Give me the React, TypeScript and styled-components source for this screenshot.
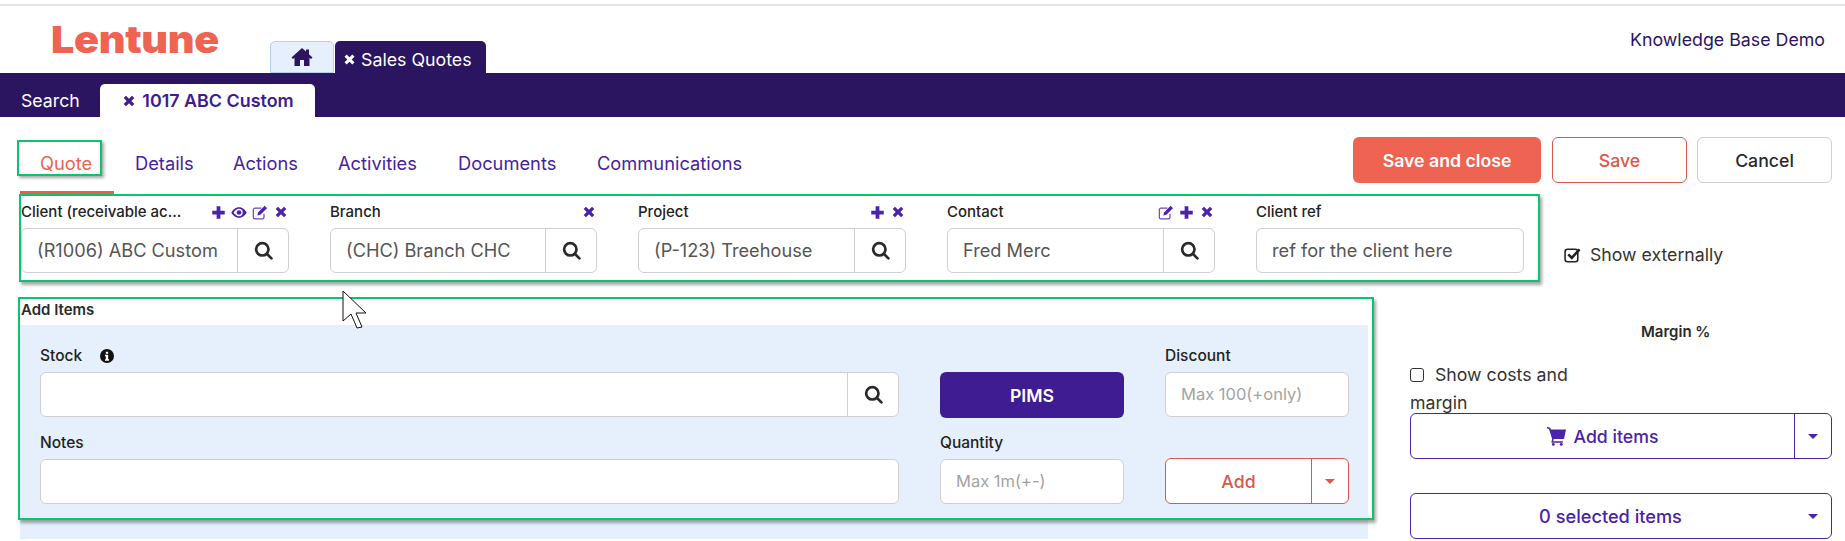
import React from "react";
import styled, { createGlobalStyle } from "styled-components";

const GREEN = "#0cc46c";
const NAVY = "#2b1561";
const PURPLE = "#3f1c91";
const VIOLET = "#4a22ab";
const CORAL = "#ee6352";
const RED = "#d9584a";
const BORDER = "#cfcfcf";

const Global = createGlobalStyle`
  html, body { margin: 0; padding: 0; background: #fff; }
  body { font-family: Inter, "Noto Sans", Roboto, sans-serif; color: #222; overflow: hidden; }
  * { box-sizing: border-box; }
`;

const Page = styled.div`
  position: relative;
  width: 1845px;
  height: 541px;
  overflow: hidden;
  border-top: 2px solid #e4e4e4;
  margin-top: 4px;
`;

const Header = styled.header`
  height: 67px;
  display: flex;
  align-items: flex-end;
  padding-left: 52px;
  padding-right: 20px;
`;

const Logo = styled.div`
  font-family: Inter, sans-serif;
  font-weight: 900;
  font-size: 37.5px;
  line-height: 34px;
  letter-spacing: -0.3px;
  color: ${CORAL};
  width: 218px;
  align-self: flex-start;
  margin-top: 17px;
  margin-left: -1px;
  margin-right: 1px;
  transform: scaleX(1.1);
  transform-origin: left center;
`;

const TopTabs = styled.div`
  display: flex;
  gap: 1px;
  flex: 1;
`;

const HomeTab = styled.div`
  width: 64px;
  height: 32px;
  background: #e6f0fc;
  border: 1px solid #b5d0f0;
  border-radius: 5px 5px 0 0;
  display: flex;
  align-items: center;
  justify-content: center;
`;

const SalesTab = styled.div`
  width: 151px;
  height: 32px;
  background: ${NAVY};
  color: #fff;
  border-radius: 5px 5px 0 0;
  font-size: 17.8px;
  display: flex;
  align-items: center;
  gap: 4px;
  padding: 4px 0 0 7px;
`;

const Company = styled.div`
  align-self: flex-start;
  margin-top: 24px;
  font-size: 17.8px;
  line-height: 20px;
  color: ${NAVY};
`;

const NavBar = styled.nav`
  height: 44px;
  background: ${NAVY};
  display: flex;
  align-items: flex-end;
  padding-left: 21px;
`;

const NavLink = styled.div`
  color: #fff;
  font-size: 17.7px;
  line-height: 33px;
  width: 79px;
`;

const ActiveTab = styled.div`
  width: 215px;
  height: 33px;
  background: #fff;
  border-radius: 5px 5px 0 0;
  color: ${PURPLE};
  font-weight: 600;
  font-size: 17.9px;
  display: flex;
  align-items: center;
  justify-content: center;
  gap: 5px;
`;

const Content = styled.main`
  display: grid;
  grid-template-columns: 1390px 1fr;
  padding-left: 17px;
`;

const Left = styled.div`
  display: flex;
  flex-direction: column;
`;

const SubTabs = styled.div`
  display: flex;
  height: 77px;
  padding-top: 23px;
  align-items: flex-start;
`;

const SubTab = styled.div<{ $w: number }>`
  width: ${(p) => p.$w}px;
  font-size: 18.3px;
  line-height: 46px;
  color: #46239c;
  flex: none;
`;

const QuoteTab = styled.div`
  position: relative;
  flex: none;
  width: 94px;
  height: 54px;
  margin-left: 3px;
  margin-right: 21px;
  padding-left: 20px;
  font-size: 18.3px;
  line-height: 46px;
  color: ${CORAL};
  border-bottom: 3px solid #e45f4f;
`;

const QuoteMark = styled.div`
  position: absolute;
  left: -3px;
  top: 0;
  width: 85px;
  height: 36px;
  border: 2px solid ${GREEN};
  box-shadow: 2px 2px 3px rgba(0, 0, 0, 0.35);
`;

const HeaderBox = styled.section`
  border: 2px solid ${GREEN};
  box-shadow: 2px 3px 3px rgba(0, 0, 0, 0.35);
  width: 1521px;
  height: 88px;
  margin-left: 2px;
  padding: 4px 0 0 0;
  display: grid;
  grid-template-columns: 268px 267px 268px 268px 268px;
  column-gap: 41px;
  position: relative;
  z-index: 1;
  background: #fff;
`;

const Field = styled.div`
  display: flex;
  flex-direction: column;
`;

const LabelRow = styled.div`
  height: 28px;
  padding-bottom: 4px;
  display: flex;
  align-items: center;
  justify-content: space-between;
`;

const Label = styled.div`
  font-size: 15px;
  font-weight: 500;
  line-height: 18px;
  color: #222;
`;

const IconSet = styled.div`
  display: flex;
  align-items: center;
  gap: 5px;
  color: ${VIOLET};
`;

const InputGroup = styled.div<{ $h?: number }>`
  display: flex;
  height: ${(p) => p.$h ?? 45}px;
  background: #fff;
  border: 1px solid ${BORDER};
  border-radius: 6px;
`;

const InputText = styled.div<{ $placeholder?: boolean }>`
  flex: 1;
  min-width: 0;
  padding-left: 15px;
  font-size: ${(p) => (p.$placeholder ? 16.5 : 18.2)}px;
  line-height: 43px;
  white-space: nowrap;
  overflow: hidden;
  color: ${(p) => (p.$placeholder ? "#a3a3a3" : "#555")};
`;

const SearchAddon = styled.div`
  width: 51px;
  flex: none;
  border-left: 1px solid ${BORDER};
  display: flex;
  align-items: center;
  justify-content: center;
`;

const ExternalCheck = styled.label`
  display: flex;
  align-items: center;
  gap: 9px;
  font-size: 17.7px;
  color: #333;
  position: absolute;
  left: 1564px;
  top: 238px;
`;

const AddLabel = styled.div`
  font-size: 15px;
  font-weight: 600;
  line-height: 18px;
  padding: 2px 0 0 1px;
  height: 26px;
  color: #2a2a2a;
`;

const AddBox = styled.section`
  position: relative;
  height: 223px;
  width: 1356px;
  padding: 2px;
  margin-top: 15px;
  margin-left: 1px;

  &::after {
    content: "";
    position: absolute;
    inset: 0;
    border: 2px solid ${GREEN};
    box-shadow: 2px 3px 3px rgba(0, 0, 0, 0.35);
    pointer-events: none;
  }
`;

const BluePanel = styled.div`
  position: absolute;
  left: 2px;
  right: 6px;
  top: 28px;
  height: 214px;
  background: #e6f0fc;
`;

const AddContent = styled.div`
  position: relative;
`;

const FormGrid = styled.div`
  display: grid;
  grid-template-columns: 859px 184px 184px;
  column-gap: 41px;
  padding-left: 20px;
  padding-top: 4px;
  grid-template-rows: 43px 46px 41px 46px;
`;

const FormLabel = styled.div`
  font-size: 15.5px;
  font-weight: 500;
  line-height: 18px;
  color: #222;
  display: flex;
  align-items: center;
  gap: 18px;
  margin-bottom: 7px;
`;

const Cell = styled.div<{ $row: number; $col: number }>`
  grid-row: ${(p) => p.$row};
  grid-column: ${(p) => p.$col};
  align-self: ${(p) => (p.$row % 2 ? "end" : "start")};
`;

const Btn = styled.div<{ $variant: "solid" | "outline" | "ghost" | "purple"; $w?: number }>`
  height: 46px;
  ${(p) => (p.$w ? `width: ${p.$w}px;` : "")}
  border-radius: 6px;
  display: flex;
  align-items: center;
  justify-content: center;
  font-size: 17.7px;
  font-weight: ${(p) => (p.$variant === "solid" || p.$variant === "purple" ? 600 : 500)};
  flex: none;
  ${(p) =>
    p.$variant === "solid"
      ? `background:${CORAL};color:#fff;`
      : p.$variant === "outline"
      ? `background:#fff;color:${RED};border:1px solid ${RED};`
      : p.$variant === "purple"
      ? `background:${PURPLE};color:#fff;`
      : `background:#fff;color:#2a2a2a;border:1px solid ${BORDER};`}
`;

const SplitBtn = styled.div<{ $color: string }>`
  display: flex;
  height: 46px;
  background: #fff;
  border: 1px solid ${(p) => p.$color};
  border-radius: 6px;
  color: ${(p) => p.$color};
  font-size: 17.7px;
  font-weight: 500;
`;

const AddSplit = styled(SplitBtn)`
  margin-top: -1px;
`;

const SplitMain = styled.div`
  flex: 1;
  display: flex;
  align-items: center;
  justify-content: center;
  gap: 8px;
`;

const SelectMain = styled(SplitMain)`
  padding-left: 16px;
  font-size: 18.2px;
`;

const SplitCaret = styled.div<{ $divider: boolean }>`
  width: 37px;
  flex: none;
  border-left: 1px solid ${(p) => (p.$divider ? "currentColor" : "transparent")};
  display: flex;
  align-items: center;
  justify-content: center;
`;

const Caret = styled.span`
  width: 0;
  height: 0;
  border-left: 5px solid transparent;
  border-right: 5px solid transparent;
  border-top: 5px solid currentColor;
`;

const Right = styled.aside`
  display: flex;
  flex-direction: column;
  width: 422px;
  margin-left: 3px;
`;

const TopActions = styled.div`
  position: absolute;
  top: 131px;
  right: 13px;
  display: flex;
`;

const ActionGap = styled.div<{ $w: number }>`
  width: ${(p) => p.$w}px;
  flex: none;
`;

const MarginTitle = styled.div`
  font-size: 15px;
  font-weight: 600;
  padding-left: 231px;
  margin-top: 206px;
  line-height: 18px;
  color: #2a2a2a;
`;

const CostsCheck = styled.div`
  margin-top: 20px;
  font-size: 17.7px;
  line-height: 28px;
  width: 200px;
  color: #333;
  height: 52px;
`;

const Box = styled.span`
  display: inline-block;
  width: 14px;
  height: 14px;
  border: 1.5px solid #333;
  border-radius: 3px;
  margin-right: 11px;
  vertical-align: -1px;
`;

const Gap = styled.div<{ $h: number }>`
  height: ${(p) => p.$h}px;
`;

const Cursor = styled.svg`
  position: absolute;
  left: 342px;
  top: 284px;
  z-index: 5;
`;

const Ico = ({ d, s = 14, c = "currentColor" }: { d: string; s?: number; c?: string }) => (
  <svg width={s} height={s} viewBox="0 0 24 24" fill={c}>
    <path d={d} />
  </svg>
);

const X = ({ s = 16 }: { s?: number }) => (
  <Ico s={s} d="M4 7.500 7.500 4 12 8.500 16.500 4 20 7.500 15.500 12 20 16.500 16.500 20 12 15.500 7.500 20 4 16.500 8.500 12Z" />
);
const Plus = () => <Ico s={15} d="M9 2h6v7h7v6h-7v7H9v-7H2V9h7Z" />;
const Eye = () => (
  <svg width="16" height="13" viewBox="0 0 24 18" fill="currentColor">
    <path
      fillRule="evenodd"
      d="M12 1C6.500 1 2.500 5 .5 9c2 4 6 8 11.500 8s9.500-4 11.500-8c-2-4-6-8-11.500-8Zm0 2.500a5.500 5.500 0 1 1 0 11 5.500 5.500 0 0 1 0-11ZM4 9c.8-1.500 2-2.800 3.400-3.700A7 7 0 0 0 7.400 12.700 10 10 0 0 1 4 9Z"
    />
    <circle cx="12" cy="9" r="3.500" />
  </svg>
);
const Edit = () => (
  <svg width="16" height="15" viewBox="0 0 24 22" fill="none" stroke="#6a45c5" strokeWidth="1.800">
    <path d="M18 13v5a2.500 2.500 0 0 1-2.500 2.500h-11A2.500 2.500 0 0 1 2 18V7a2.500 2.500 0 0 1 2.500-2.500H14" />
    <path fill={VIOLET} stroke="none" d="M9 11 19 1l3.500 3.500-10 10L8 15.500Z" />
  </svg>
);
const Search = () => (
  <svg width="19" height="19" viewBox="0 0 24 24" fill="none" stroke="#2a2a2a" strokeWidth="3.400" strokeLinecap="round">
    <circle cx="10.500" cy="10.500" r="7.800" />
    <path d="m16.500 16.500 5.500 5.500" />
  </svg>
);
const Home = () => (
  <Ico s={24} c={NAVY} d="M12 3 1.500 12.500 3 14l1.500-1.300V21H10v-6h4v6h5.500v-8.300L21 14l1.500-1.500L19 9.300V4.500h-3v2.100Z" />
);
const Info = () => (
  <svg width="14" height="14" viewBox="0 0 24 24">
    <circle cx="12" cy="12" r="12" fill="#111" />
    <path fill="#fff" d="M10 4.500h4v3.500h-4ZM8.500 10H14v7.500h1.500V20h-7v-2.500H10V12.500H8.500Z" />
  </svg>
);
const Cart = () => (
  <svg width="19" height="19" viewBox="0 0 24 24" fill="currentColor">
    <path d="M0 0c3 0 4.500 1 5 3h19l-2.500 12H8.500L7.700 18H20v1.800H5.500L6.500 15 3 4C2.700 2.800 1.800 2 0 2Z" />
    <circle cx="8" cy="22" r="1.800" />
    <circle cx="18" cy="22" r="1.800" />
  </svg>
);
const Checked = () => (
  <svg width="17" height="16" viewBox="0 0 24 22" fill="none" stroke="#222" strokeWidth="2.200">
    <rect x="1.500" y="3" width="18" height="17.500" rx="3.500" />
    <path d="m6 10 5 5L22 3" strokeWidth="3.600" />
  </svg>
);

const SearchField = ({ value }: { value?: string }) => (
  <InputGroup>
    <InputText>{value}</InputText>
    <SearchAddon>
      <Search />
    </SearchAddon>
  </InputGroup>
);

export default function App() {
  return (
    <Page>
      <Global />
      <Header>
        <Logo>Lentune</Logo>
        <TopTabs>
          <HomeTab>
            <Home />
          </HomeTab>
          <SalesTab>
            <X s={15} />
            Sales Quotes
          </SalesTab>
        </TopTabs>
        <Company>Knowledge Base Demo</Company>
      </Header>
      <NavBar>
        <NavLink>Search</NavLink>
        <ActiveTab>
          <X s={16} />
          1017 ABC Custom
        </ActiveTab>
      </NavBar>
      <TopActions>
        <Btn $variant="solid" $w={188}>Save and close</Btn>
        <ActionGap $w={11} />
        <Btn $variant="outline" $w={135}>Save</Btn>
        <ActionGap $w={10} />
        <Btn $variant="ghost" $w={135}>Cancel</Btn>
      </TopActions>
      <Content>
        <Left>
          <SubTabs>
            <QuoteTab>
              Quote
              <QuoteMark />
            </QuoteTab>
            <SubTab $w={98}>Details</SubTab>
            <SubTab $w={105}>Actions</SubTab>
            <SubTab $w={120}>Activities</SubTab>
            <SubTab $w={139}>Documents</SubTab>
            <SubTab $w={160}>Communications</SubTab>
          </SubTabs>
          <HeaderBox>
            <Field>
              <LabelRow>
                <Label>Client (receivable ac...</Label>
                <IconSet>
                  <Plus />
                  <Eye />
                  <Edit />
                  <X />
                </IconSet>
              </LabelRow>
              <SearchField value="(R1006) ABC Custom" />
            </Field>
            <Field>
              <LabelRow>
                <Label>Branch</Label>
                <IconSet>
                  <X />
                </IconSet>
              </LabelRow>
              <SearchField value="(CHC) Branch CHC" />
            </Field>
            <Field>
              <LabelRow>
                <Label>Project</Label>
                <IconSet>
                  <Plus />
                  <X />
                </IconSet>
              </LabelRow>
              <SearchField value="(P-123) Treehouse" />
            </Field>
            <Field>
              <LabelRow>
                <Label>Contact</Label>
                <IconSet>
                  <Edit />
                  <Plus />
                  <X />
                </IconSet>
              </LabelRow>
              <SearchField value="Fred Merc" />
            </Field>
            <Field>
              <LabelRow>
                <Label>Client ref</Label>
              </LabelRow>
              <InputGroup>
                <InputText>ref for the client here</InputText>
              </InputGroup>
            </Field>
          </HeaderBox>
          <AddBox>
            <BluePanel />
            <AddContent>
              <AddLabel>Add Items</AddLabel>
              <FormGrid>
                <Cell $row={1} $col={1}>
                  <FormLabel>
                    Stock <Info />
                  </FormLabel>
                </Cell>
                <Cell $row={2} $col={1}>
                  <SearchField />
                </Cell>
                <Cell $row={2} $col={2}>
                  <Btn $variant="purple">PIMS</Btn>
                </Cell>
                <Cell $row={1} $col={3}>
                  <FormLabel>Discount</FormLabel>
                </Cell>
                <Cell $row={2} $col={3}>
                  <InputGroup>
                    <InputText $placeholder>Max 100(+only)</InputText>
                  </InputGroup>
                </Cell>
                <Cell $row={3} $col={1}>
                  <FormLabel>Notes</FormLabel>
                </Cell>
                <Cell $row={4} $col={1}>
                  <InputGroup />
                </Cell>
                <Cell $row={3} $col={2}>
                  <FormLabel>Quantity</FormLabel>
                </Cell>
                <Cell $row={4} $col={2}>
                  <InputGroup>
                    <InputText $placeholder>Max 1m(+-)</InputText>
                  </InputGroup>
                </Cell>
                <Cell $row={4} $col={3}>
                  <AddSplit $color={RED}>
                    <SplitMain>Add</SplitMain>
                    <SplitCaret $divider>
                      <Caret />
                    </SplitCaret>
                  </AddSplit>
                </Cell>
              </FormGrid>
            </AddContent>
          </AddBox>
        </Left>
        <Right>
          <MarginTitle>Margin %</MarginTitle>
          <CostsCheck>
            <Box />
            Show costs and margin
          </CostsCheck>
          <SplitBtn $color={VIOLET}>
            <SplitMain>
              <Cart />
              Add items
            </SplitMain>
            <SplitCaret $divider>
              <Caret />
            </SplitCaret>
          </SplitBtn>
          <Gap $h={34} />
          <SplitBtn $color={VIOLET}>
            <SelectMain>0 selected items</SelectMain>
            <SplitCaret $divider={false}>
              <Caret />
            </SplitCaret>
          </SplitBtn>
        </Right>
      </Content>
      <ExternalCheck>
        <Checked />
        Show externally
      </ExternalCheck>
      <Cursor width="26" height="40" viewBox="0 0 26 40">
        <path d="M1 1v30l8-7 6 14 5-1-6-14h10Z" fill="#fff" stroke="#111" strokeWidth="1" />
      </Cursor>
    </Page>
  );
}
